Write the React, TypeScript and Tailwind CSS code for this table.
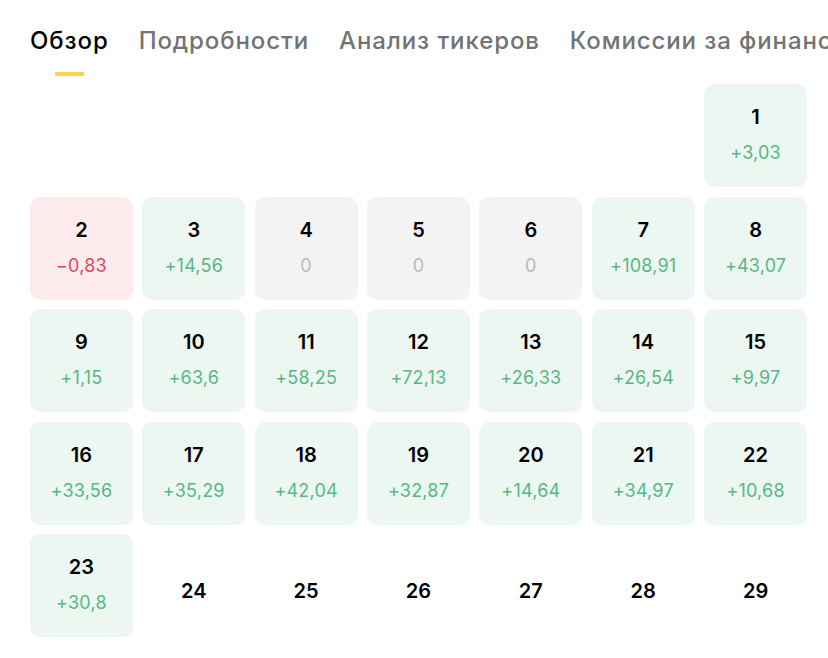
type Day = { day: number; value?: string; kind?: "up" | "down" | "zero" };

const days: Day[] = [
  { day: 1, value: "+3,03", kind: "up" },
  { day: 2, value: "−0,83", kind: "down" },
  { day: 3, value: "+14,56", kind: "up" },
  { day: 4, value: "0", kind: "zero" },
  { day: 5, value: "0", kind: "zero" },
  { day: 6, value: "0", kind: "zero" },
  { day: 7, value: "+108,91", kind: "up" },
  { day: 8, value: "+43,07", kind: "up" },
  { day: 9, value: "+1,15", kind: "up" },
  { day: 10, value: "+63,6", kind: "up" },
  { day: 11, value: "+58,25", kind: "up" },
  { day: 12, value: "+72,13", kind: "up" },
  { day: 13, value: "+26,33", kind: "up" },
  { day: 14, value: "+26,54", kind: "up" },
  { day: 15, value: "+9,97", kind: "up" },
  { day: 16, value: "+33,56", kind: "up" },
  { day: 17, value: "+35,29", kind: "up" },
  { day: 18, value: "+42,04", kind: "up" },
  { day: 19, value: "+32,87", kind: "up" },
  { day: 20, value: "+14,64", kind: "up" },
  { day: 21, value: "+34,97", kind: "up" },
  { day: 22, value: "+10,68", kind: "up" },
  { day: 23, value: "+30,8", kind: "up" },
  { day: 24 },
  { day: 25 },
  { day: 26 },
  { day: 27 },
  { day: 28 },
  { day: 29 },
];

const tabs = ["Обзор", "Подробности", "Анализ тикеров", "Комиссии за финанс"];

const cellBg = {
  up: "bg-[#edf7f2]",
  down: "bg-[#fdebee]",
  zero: "bg-[#f3f3f3]",
};

const valueColor = {
  up: "text-[#55b985]",
  down: "text-[#e5485a]",
  zero: "text-[#b9b9b9]",
};

const DayCell = ({ d }: { d: Day }) => {
  if (!d.kind) {
    return (
      <div className="h-[103px] flex items-center justify-center pt-[10px]">
        <span className="text-[20px] font-semibold text-black">{d.day}</span>
      </div>
    );
  }
  return (
    <div className={`h-[103px] rounded-[10px] flex flex-col items-center pt-[20px] ${cellBg[d.kind]}`}>
      <span className="text-[20px] leading-[26px] font-semibold text-black">{d.day}</span>
      <span className={`mt-[12px] text-[18px] leading-[22px] tracking-[0.2px] ${valueColor[d.kind]}`}>{d.value}</span>
    </div>
  );
};

export default function App() {
  return (
    <div className="w-[828px] h-[658px] overflow-hidden bg-white font-['Inter',sans-serif]">
      <div className="flex gap-[30px] pl-[30px] pt-[24px] whitespace-nowrap">
        {tabs.map((t, i) => (
          <div key={t} className="flex flex-col items-center shrink-0">
            <span
              className={`text-[24px] leading-[34px] font-medium tracking-[0.9px] ${i === 0 ? "text-black" : "text-[#737373]"}`}
            >
              {t}
            </span>
            <div className={`mt-[14px] h-[4px] w-[29px] ${i === 0 ? "bg-[#f7d54a]" : "bg-transparent"}`} />
          </div>
        ))}
      </div>

      <div className="ml-[30px] mt-[8px] w-[777px] grid grid-cols-7 gap-[9.5px]">
        {Array.from({ length: 6 }).map((_, i) => (
          <div key={`e${i}`} />
        ))}
        {days.map((d) => (
          <DayCell key={d.day} d={d} />
        ))}
      </div>
    </div>
  );
}
